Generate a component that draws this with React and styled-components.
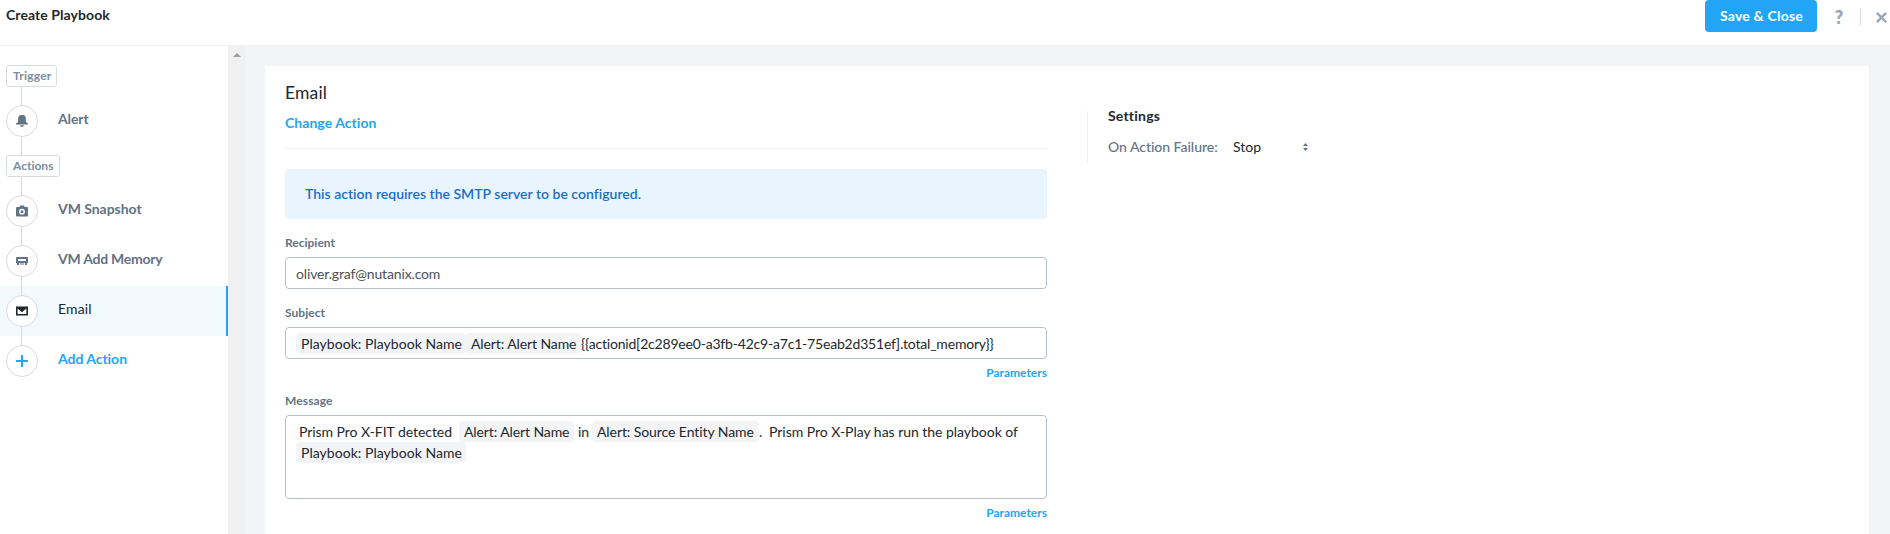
import React from 'react';
import styled, { createGlobalStyle, css } from 'styled-components';

const color = {
  ink: '#22272e',
  slate: '#627386',
  muted: '#9aa5b5',
  tag: '#7b8da3',
  blue: '#22a5f7',
  line: '#f2f4f6',
  node: '#d6dbe2',
  field: '#b8bfcc',
};

const GlobalStyle = createGlobalStyle`
  * { box-sizing: border-box; }
  body {
    margin: 0;
    background: #fff;
    color: ${color.ink};
    font: 400 14px/20px Lato, "Liberation Sans", sans-serif;
    font-variant-ligatures: none;
  }
`;

const tracking = css`
  letter-spacing: ${(p) => p.$track || 0}px;
  white-space: pre;
`;

const Page = styled.div`
  display: flex;
  flex-direction: column;
  height: 534px;
  overflow: hidden;
`;

const Header = styled.header`
  display: flex;
  align-items: flex-start;
  justify-content: space-between;
  flex: none;
  height: 46px;
  padding-left: 6px;
  border-bottom: 1px solid #f0f1f3;
`;

const PageTitle = styled.h1`
  margin: 5px 0 0;
  font-size: 14px;
  line-height: 20px;
  font-weight: 700;
  ${tracking}
`;

const HeaderActions = styled.div`
  display: flex;
  align-items: center;
  height: 34px;
  padding-right: 3px;
`;

const SaveButton = styled.button`
  align-self: flex-start;
  width: 112px;
  height: 32px;
  padding: 0 0 0 1px;
  border: 0;
  border-radius: 4px;
  background: ${color.blue};
  color: #fff;
  font: inherit;
  font-weight: 700;
  ${tracking}
`;

const HelpButton = styled.button`
  width: 10px;
  height: 20px;
  margin: 0 16px 0 17px;
  padding: 0;
  border: 0;
  background: none;
  color: ${color.muted};
  font: inherit;
  font-size: 18px;
  font-weight: 800;
  line-height: 18px;
`;

const HeaderRule = styled.span`
  width: 1px;
  height: 16px;
  margin-right: 15px;
  background: ${color.node};
`;

const CloseIcon = styled.svg`
  display: block;
  width: 11px;
  height: 11px;
`;

const Body = styled.div`
  display: flex;
  flex: 1;
  min-height: 0;
  background: ${color.line};
`;

const Sidebar = styled.nav`
  width: 228px;
  flex: none;
  padding-top: 19px;
  background: #fff;
`;

const TagRow = styled.div`
  display: flex;
  flex-direction: column;
  align-items: flex-start;
  padding-left: 6px;
`;

const Tag = styled.span`
  width: ${(p) => p.$width}px;
  height: 22px;
  padding-left: 6px;
  border: 1px solid ${color.node};
  border-radius: 3px;
  color: ${color.tag};
  font-size: 12px;
  font-weight: 700;
  line-height: 20px;
  ${tracking}
`;

const Segment = styled.span`
  display: block;
  width: 1px;
  height: 9px;
  margin-left: 15px;
  background: ${(p) => (p.$hidden ? 'transparent' : color.node)};
`;

const StepRow = styled.div`
  display: flex;
  height: 50px;
  padding-left: 6px;
  background: ${(p) => (p.$active ? '#f3faff' : 'transparent')};
  border-right: 2px solid ${(p) => (p.$active ? color.blue : 'transparent')};
`;

const StepTrack = styled.div`
  width: 32px;
`;

const StepNode = styled.div`
  display: flex;
  align-items: center;
  justify-content: center;
  width: 32px;
  height: 32px;
  border: 1px solid ${color.node};
  border-radius: 50%;
  background: #fff;
`;

const StepLabel = styled.span`
  margin: 13px 0 0 20px;
  color: ${(p) => p.$color};
  font-weight: ${(p) => p.$weight || 700};
  ${tracking}
`;

const ScrollTrack = styled.div`
  display: flex;
  justify-content: center;
  width: 17px;
  flex: none;
  padding-top: 7px;
  background: #f0f0f0;
`;

const Card = styled.main`
  display: flex;
  align-items: flex-start;
  flex: 1;
  margin: 20px 21px 0 20px;
  padding-left: 20px;
  background: #fff;
`;

const Form = styled.section`
  width: 762px;
  padding-top: 15px;
`;

const FormTitle = styled.h2`
  margin: 0;
  font-size: 17.5px;
  font-weight: 400;
  line-height: 24px;
  ${tracking}
`;

const ChangeLink = styled.a`
  display: block;
  margin-top: 8px;
  padding-bottom: 15px;
  border-bottom: 1px solid #f0f1f4;
  color: ${color.blue};
  font-weight: 700;
  ${tracking}
`;

const Banner = styled.div`
  height: 50px;
  margin-top: 20px;
  padding: 15px 20px;
  border-radius: 4px;
  background: #e9f5fe;
  color: #1b6dc6;
  font-weight: 600;
  ${tracking}
`;

const Label = styled.label`
  display: block;
  margin: ${(p) => p.$top}px 0 6px;
  color: ${color.slate};
  font-size: 12px;
  font-weight: 700;
  line-height: 16px;
  ${tracking}
`;

const Field = styled.div`
  height: ${(p) => p.$height || 32}px;
  padding: 5px 10px;
  border: 1px solid ${color.field};
  border-radius: 4px;
`;

const Line = styled.div`
  display: flex;
  height: 21px;
  line-height: 21px;
`;

const Chip = styled.span`
  width: ${(p) => p.$width}px;
  height: 21px;
  padding-left: 5px;
  border-radius: 4px;
  background: ${color.line};
  ${tracking}
`;

const Words = styled.span`
  width: ${(p) => (p.$width ? `${p.$width}px` : 'auto')};
  padding-left: ${(p) => p.$indent || 0}px;
  color: ${(p) => p.$color || 'inherit'};
  ${tracking}
`;

const ParametersLink = styled.a`
  display: block;
  margin-top: 6px;
  color: ${color.blue};
  font-size: 12px;
  font-weight: 700;
  line-height: 16px;
  text-align: right;
  ${tracking}
`;

const Settings = styled.aside`
  height: 52px;
  margin: 45px 0 0 40px;
  padding-left: 20px;
  border-left: 1px solid #f0f1f4;
`;

const SettingsTitle = styled.h3`
  margin: -5px 0 11px;
  font-size: 14px;
  font-weight: 700;
  line-height: 20px;
  ${tracking}
`;

const SettingRow = styled.div`
  display: flex;
  align-items: center;
`;

const SettingName = styled.span`
  width: 125px;
  color: ${color.slate};
  font-weight: 500;
  ${tracking}
`;

const SettingValue = styled.span`
  width: 70px;
  ${tracking}
`;

const BellIcon = () => (
  <svg width="12" height="12" viewBox="0 0 12 12" fill={color.slate}>
    <path d="M3 0.9Q3.8 0 5 0H7Q8.2 0 9 .9Q9.8 1.8 9.8 3V6.4Q10 7.5 12 8.4V9.4H0V8.4Q2 7.5 2.2 6.4V3Q2.2 1.8 3 .9ZM4 10.2H8Q7.6 12 6 12Q4.4 12 4 10.2Z" />
  </svg>
);

const CameraIcon = () => (
  <svg width="12" height="12" viewBox="0 0 12 12" fill={color.slate}>
    <path d="M3.4 2L4 .5H8L8.6 2H11Q12 2 12 3V10.4Q12 11.4 11 11.4H1Q0 11.4 0 10.4V3Q0 2 1 2Z" />
    <circle cx="6" cy="6.7" r="2.2" fill="none" stroke="#fff" strokeWidth="1.4" />
  </svg>
);

const MemoryIcon = () => (
  <svg width="12" height="12" viewBox="0 0 12 12" fill={color.slate}>
    <path fillRule="evenodd" d="M1 2H11Q12 2 12 3V8H0V3Q0 2 1 2ZM2 4V6H10V4Z" />
    <path d="M1 8H3V10H1ZM4.5 8H5.5V10H4.5ZM6.5 8H7.5V10H6.5ZM9 8H11V10H9Z" />
  </svg>
);

const MailIcon = () => (
  <svg width="12" height="12" viewBox="0 0 12 12" fill={color.ink}>
    <path fillRule="evenodd" d="M0 1.5H12V10.5H0ZM1.6 3.4V9H10.4V3.4L6 7.2Z" />
  </svg>
);

const PlusIcon = () => (
  <svg width="12" height="12" viewBox="0 0 12 12" fill={color.blue}>
    <path d="M5 0H7V5H12V7H7V12H5V7H0V5H5Z" />
  </svg>
);

function Step({ icon, label, last, active, ...text }) {
  return (
    <StepRow $active={active}>
      <StepTrack>
        <Segment />
        <StepNode>{icon}</StepNode>
        <Segment $hidden={last} />
      </StepTrack>
      <StepLabel $color={color.slate} {...text}>{label}</StepLabel>
    </StepRow>
  );
}

export default function App() {
  return (
    <Page>
      <GlobalStyle />
      <Header>
        <PageTitle $track={0.08}>Create Playbook</PageTitle>
        <HeaderActions>
          <SaveButton $track={0.19}>Save &amp; Close</SaveButton>
          <HelpButton>?</HelpButton>
          <HeaderRule />
          <CloseIcon viewBox="0 0 10 10">
            <path d="M.8.8L9.2 9.2M9.2.8L.8 9.2" stroke={color.muted} strokeWidth="2.1" />
          </CloseIcon>
        </HeaderActions>
      </Header>
      <Body>
        <Sidebar>
          <TagRow>
            <Tag $width={51} $track={0.22}>Trigger</Tag>
            <Segment />
          </TagRow>
          <Step icon={<BellIcon />} label="Alert" $track={-0.12} />
          <TagRow>
            <Segment />
            <Tag $width={54} $track={0}>Actions</Tag>
            <Segment />
          </TagRow>
          <Step icon={<CameraIcon />} label="VM Snapshot" $track={-0.04} />
          <Step icon={<MemoryIcon />} label="VM Add Memory" $track={-0.24} />
          <Step icon={<MailIcon />} label="Email" active $color={color.ink} $weight={400} $track={0.15} />
          <Step icon={<PlusIcon />} label="Add Action" last $color={color.blue} $track={-0.04} />
        </Sidebar>
        <ScrollTrack>
          <svg width="8" height="4" viewBox="0 0 8 4">
            <path d="M4 0L8 4H0Z" fill="#a0a0a0" />
          </svg>
        </ScrollTrack>
        <Card>
          <Form>
            <FormTitle $track={0.15}>Email</FormTitle>
            <ChangeLink $track={0.05}>Change Action</ChangeLink>
            <Banner $track={0.01}>This action requires the SMTP server to be configured.</Banner>

            <Label $top={16} $track={0}>Recipient</Label>
            <Field>
              <Line>
                <Words $track={-0.15} $color="#4c5157">oliver.graf@nutanix.com</Words>
              </Line>
            </Field>

            <Label $top={16} $track={0.05}>Subject</Label>
            <Field>
              <Line>
                <Chip $width={170} $track={0.04}>Playbook: Playbook Name</Chip>
                <Chip $width={115} $track={-0.1}>Alert: Alert Name</Chip>
                <Words $track={-0.195}>{'{{actionid[2c289ee0-a3fb-42c9-a7c1-75eab2d351ef].total_memory}}'}</Words>
              </Line>
            </Field>
            <ParametersLink>Parameters</ParametersLink>

            <Label $top={12} $track={0.1}>Message</Label>
            <Field $height={84}>
              <Line>
                <Words $width={163} $indent={3} $track={-0.05}>Prism Pro X-FIT detected</Words>
                <Chip $width={115} $track={-0.1}>Alert: Alert Name</Chip>
                <Words $width={18} $indent={4}>in</Words>
                <Chip $width={167} $track={-0.08}>Alert: Source Entity Name</Chip>
                <Words $width={10}>.</Words>
                <Words $track={-0.03}>Prism Pro X-Play has run the playbook of</Words>
              </Line>
              <Line>
                <Chip $width={170} $track={0.04}>Playbook: Playbook Name</Chip>
              </Line>
            </Field>
            <ParametersLink>Parameters</ParametersLink>
          </Form>
          <Settings>
            <SettingsTitle $track={0.2}>Settings</SettingsTitle>
            <SettingRow>
              <SettingName $track={-0.03}>On Action Failure:</SettingName>
              <SettingValue>Stop</SettingValue>
              <svg width="5" height="8" viewBox="0 0 5 8" fill={color.slate}>
                <path d="M2.5 0L5 3H0ZM0 5H5L2.5 8Z" />
              </svg>
            </SettingRow>
          </Settings>
        </Card>
      </Body>
    </Page>
  );
}
